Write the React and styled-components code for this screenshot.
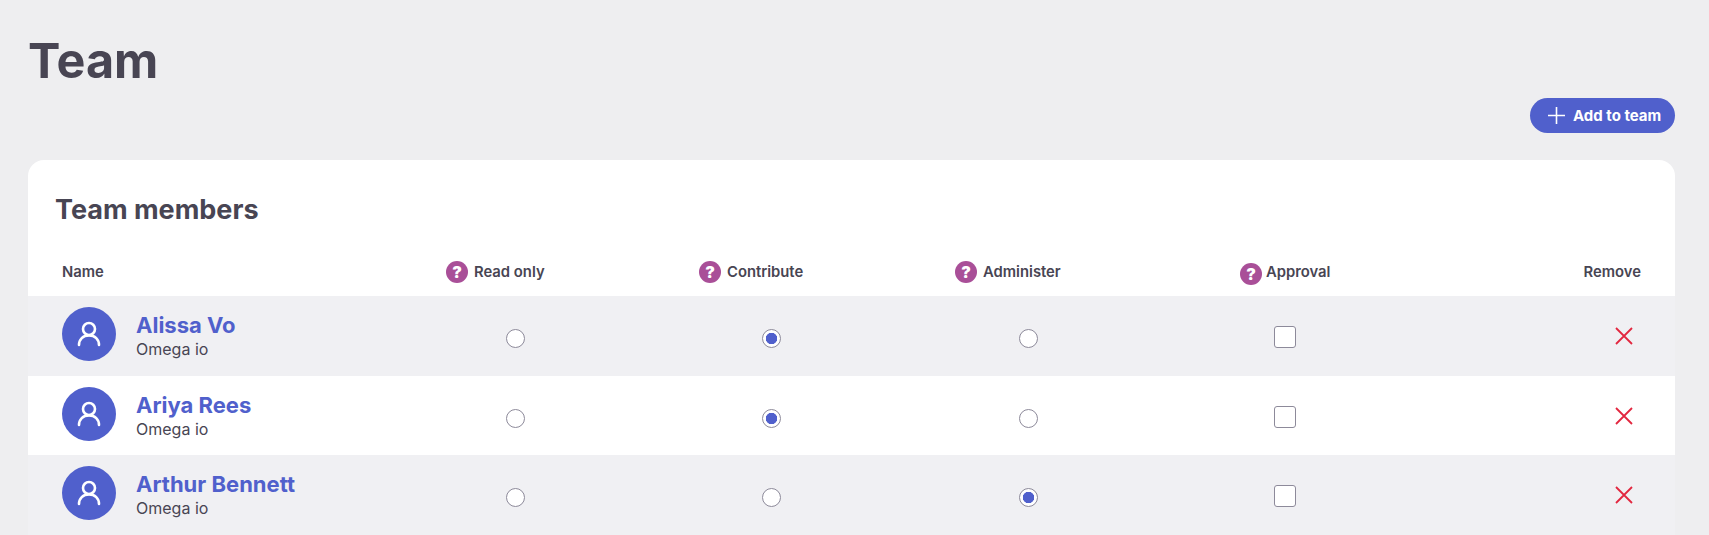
import React from "react";
import styled, { createGlobalStyle } from "styled-components";

const GlobalStyle = createGlobalStyle`
  html, body {
    margin: 0;
    height: 535px;
    overflow: hidden;
    background: #eeeef0;
    font-family: Inter, "Liberation Sans", sans-serif;
    color: #484553;
  }
  * { box-sizing: border-box; }
`;

const Page = styled.main`
  padding: 29px 34px 0 28px;
`;

const Title = styled.h1`
  margin: 0;
  font-size: 48.5px;
  line-height: 64px;
  font-weight: 700;
`;

const Actions = styled.div`
  display: flex;
  justify-content: flex-end;
  margin-top: 5px;
  margin-bottom: 27px;
`;

const AddButton = styled.button`
  display: flex;
  align-items: center;
  gap: 8px;
  width: 145px;
  height: 35px;
  padding: 0 0 0 18px;
  border: 0;
  border-radius: 18px;
  background: #5060cc;
  color: #fff;
  font: 700 15px Inter, sans-serif;
`;

const Card = styled.section`
  background: #fff;
  border-radius: 16px 16px 0 0;
  overflow: hidden;
`;

const CardTitle = styled.h2`
  margin: 0;
  padding: 33px 0 0 27px;
  font-size: 27px;
  line-height: 34px;
  font-weight: 700;
`;

const grid = `
  display: grid;
  grid-template-columns: 384px 253px 256px 285px 200px 1fr;
  padding: 0 34px;
`;

const HeaderRow = styled.div`
  ${grid}
  height: 69px;
  padding-top: 33px;
  font-size: 14.8px;
  font-weight: 600;
`;

const HeaderCell = styled.div`
  display: flex;
  align-items: center;
  align-self: start;
  gap: 6px;
  height: 24px;
  justify-content: ${(p) => (p.$end ? "flex-end" : "flex-start")};
`;

const Help = styled.span`
  flex: none;
  display: flex;
  align-items: center;
  justify-content: center;
  width: 22px;
  height: 22px;
  border-radius: 50%;
  background: #a94f98;
  color: #fff;
  font-size: 16px;
  font-weight: 900;
  margin-top: ${(p) => (p.$low ? "3px" : "0")};
  margin-right: ${(p) => (p.$low ? "-2px" : "0")};
`;

const Row = styled.div`
  ${grid}
  height: 79.67px;
  background: ${(p) => (p.$shaded ? "#f0f0f3" : "#fff")};
`;

const Member = styled.div`
  display: flex;
  gap: 20px;
  padding-top: 11px;
`;

const Avatar = styled.div`
  width: 54px;
  height: 54px;
  border-radius: 50%;
  background: #5060cc;
  display: flex;
  align-items: center;
  justify-content: center;
`;

const MemberText = styled.div`
  display: flex;
  flex-direction: column;
  padding-top: 6px;
`;

const MemberName = styled.a`
  color: #5060cc;
  font-size: 22px;
  line-height: 25px;
  font-weight: 700;
`;

const Company = styled.span`
  font-size: 16px;
  line-height: 22px;
  margin-top: 0;
`;

const Cell = styled.div`
  display: flex;
  padding-top: ${(p) => p.$top}px;
  padding-left: ${(p) => p.$left || 0}px;
  justify-content: ${(p) => (p.$end ? "flex-end" : "flex-start")};
`;

const Radio = styled.input.attrs({ type: "radio", readOnly: true })`
  appearance: none;
  margin: 0;
  width: 19px;
  height: 19px;
  border: 1px solid #8d8a9a;
  border-radius: 50%;
  background: #fff;
  &:checked {
    background: radial-gradient(circle, #5060cc 0 5.4px, #fff 6px);
  }
`;

const Check = styled.input.attrs({ type: "checkbox", readOnly: true })`
  appearance: none;
  margin: 0;
  width: 22px;
  height: 22px;
  border: 1px solid #8d8a9a;
  border-radius: 3px;
  background: #fff;
`;

const RemoveButton = styled.button`
  display: flex;
  padding: 0;
  margin-right: 8px;
  border: 0;
  background: none;
`;

const UserIcon = () => (
  <svg width="24" height="26" viewBox="0 0 24 26" fill="none" stroke="#fff" strokeWidth="2.6" strokeLinecap="round">
    <circle cx="12" cy="8" r="6" />
    <path d="M2 24c0-5.500 4-9.600 10-9.600s10 4.100 10 9.600" />
  </svg>
);

const PlusIcon = () => (
  <svg width="17" height="17" viewBox="0 0 17 17" stroke="#fff" strokeWidth="1.6">
    <path d="M8.500 0v17M0 8.500h17" />
  </svg>
);

const CrossIcon = () => (
  <svg width="18" height="18" viewBox="0 0 18 18" stroke="#e2263f" strokeWidth="1.8">
    <path d="M1 1l16 16M17 1L1 17" />
  </svg>
);

const members = [
  { name: "Alissa Vo", role: "contribute" },
  { name: "Ariya Rees", role: "contribute" },
  { name: "Arthur Bennett", role: "administer" },
];

export default function App() {
  return (
    <Page>
      <GlobalStyle />
      <Title>Team</Title>
      <Actions>
        <AddButton>
          <PlusIcon />
          Add to team
        </AddButton>
      </Actions>
      <Card>
        <CardTitle>Team members</CardTitle>
        <HeaderRow>
          <HeaderCell>Name</HeaderCell>
          <HeaderCell><Help>?</Help>Read only</HeaderCell>
          <HeaderCell><Help>?</Help>Contribute</HeaderCell>
          <HeaderCell><Help>?</Help>Administer</HeaderCell>
          <HeaderCell><Help $low>?</Help>Approval</HeaderCell>
          <HeaderCell $end>Remove</HeaderCell>
        </HeaderRow>
        {members.map((m, i) => (
          <Row key={m.name} $shaded={i % 2 === 0}>
            <Member>
              <Avatar><UserIcon /></Avatar>
              <MemberText>
                <MemberName>{m.name}</MemberName>
                <Company>Omega io</Company>
              </MemberText>
            </Member>
            <Cell $top={33} $left={60}><Radio name={m.name} checked={false} /></Cell>
            <Cell $top={33} $left={63}><Radio name={m.name} checked={m.role === "contribute"} /></Cell>
            <Cell $top={33} $left={64}><Radio name={m.name} checked={m.role === "administer"} /></Cell>
            <Cell $top={30} $left={34}><Check /></Cell>
            <Cell $top={31} $end><RemoveButton><CrossIcon /></RemoveButton></Cell>
          </Row>
        ))}
      </Card>
    </Page>
  );
}
